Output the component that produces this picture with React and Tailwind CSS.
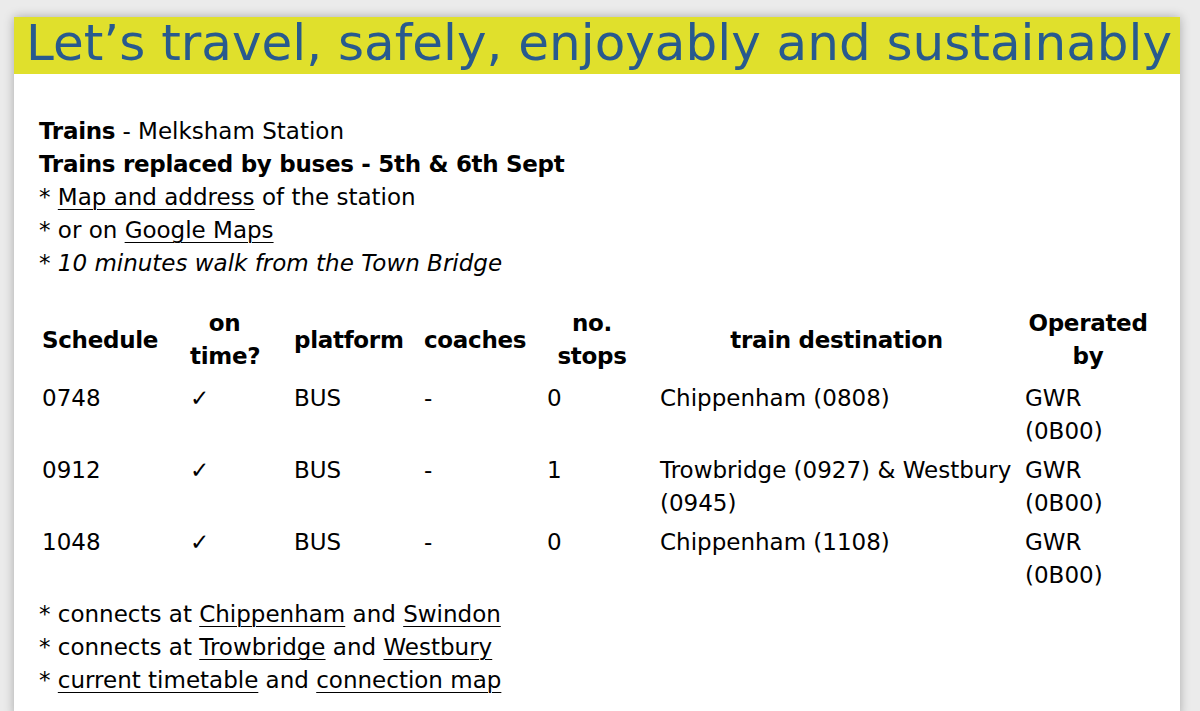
export default function App() {
  const font = { fontFamily: '"DejaVu Sans", Verdana, sans-serif' };
  const rows = [
    { t: "0748", s: "0", d: "Chippenham (0808)" },
    { t: "0912", s: "1", d: "Trowbridge (0927) & Westbury (0945)" },
    { t: "1048", s: "0", d: "Chippenham (1108)" },
  ];
  const L = ({ children }) => <a className="underline decoration-1 underline-offset-[4px] text-black">{children}</a>;
  return (
    <div className="min-h-screen bg-[#ebebeb] pt-[17px] pl-[14px]" style={font}>
      <div className="w-[1166px] min-h-[700px] bg-white shadow-[0_0_10px_rgba(0,0,0,0.28)]">
        <div className="h-[57px] bg-[#e0e02c] pl-[12px]">
          <div className="text-[50px] leading-[53px] text-[#285a8e] whitespace-nowrap">
            Let’s travel, safely, enjoyably and sustainably
          </div>
        </div>
        <div className="pl-[25px] pt-[41px] text-[23px] leading-[33px] text-black">
          <div><b className="tracking-[-0.3px]">Trains</b> - Melksham Station</div>
          <div className="font-bold tracking-[-0.3px]">Trains replaced by buses - 5th &amp; 6th Sept</div>
          <div>* <L>Map and address</L> of the station</div>
          <div>* or on <L>Google Maps</L></div>
          <div>* <i>10 minutes walk from the Town Bridge</i></div>
          <table className="mt-[24px] ml-[3px] w-[1113px] table-fixed border-collapse">
            <colgroup>
              <col className="w-[148px]" />
              <col className="w-[104px]" />
              <col className="w-[130px]" />
              <col className="w-[123px]" />
              <col className="w-[113px]" />
              <col className="w-[365px]" />
              <col className="w-[130px]" />
            </colgroup>
            <thead>
              <tr className="font-bold text-center align-middle tracking-[-0.3px]">
                <th className="pr-[33px] pt-[3px] pb-[6px] text-left">Schedule</th>
                <th className="pr-[35px] pt-[3px] pb-[6px]">on<br />time?</th>
                <th className="pr-[23px] pt-[3px] pb-[6px] text-left">platform</th>
                <th className="pr-[23px] pt-[3px] pb-[6px] text-left">coaches</th>
                <th className="pr-[23px] pt-[3px] pb-[6px]">no.<br />stops</th>
                <th className="pr-[12px] pt-[3px] pb-[6px]">train destination</th>
                <th className="pr-[4px] pt-[3px] pb-[6px]">Operated<br />by</th>
              </tr>
            </thead>
            <tbody>
              {rows.map((r) => (
                <tr key={r.t} className="align-top text-left">
                  <td className="py-[3px] pr-[33px]">{r.t}</td>
                  <td className="py-[3px] pr-[35px]">✓</td>
                  <td className="py-[3px] pr-[23px]">BUS</td>
                  <td className="py-[3px] pr-[23px]">-</td>
                  <td className="py-[3px] pr-[23px]">{r.s}</td>
                  <td className="py-[3px] pr-[12px]">{r.d}</td>
                  <td className="py-[3px]">GWR<br />(0B00)</td>
                </tr>
              ))}
            </tbody>
          </table>
          <div className="mt-[3px]">* connects at <L>Chippenham</L> and <L>Swindon</L></div>
          <div>* connects at <L>Trowbridge</L> and <L>Westbury</L></div>
          <div>* <L>current timetable</L> and <L>connection map</L></div>
        </div>
      </div>
    </div>
  );
}
